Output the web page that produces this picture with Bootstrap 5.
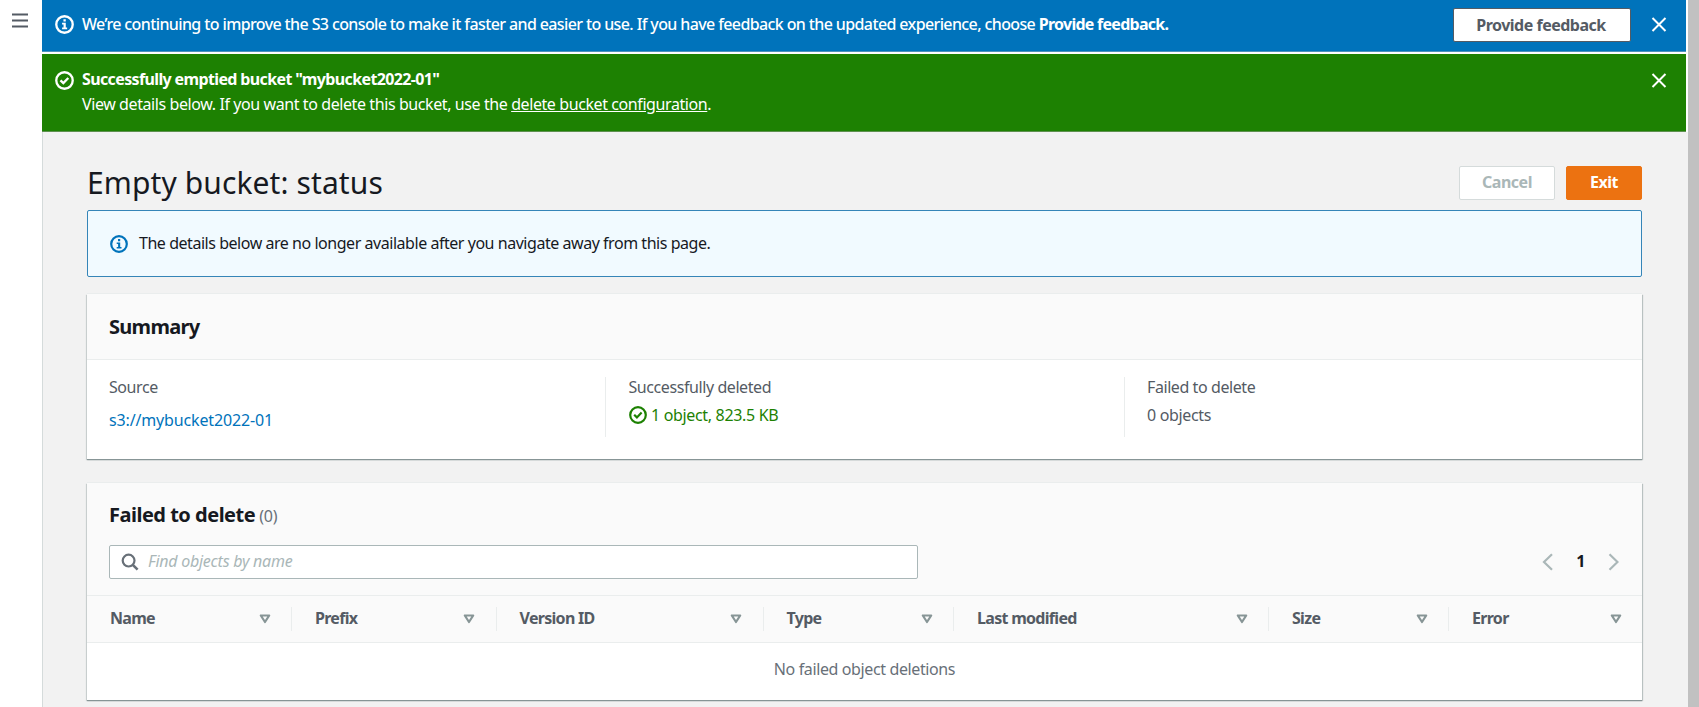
<!DOCTYPE html>
<html lang="en">
<head>
<meta charset="utf-8">
<title>Empty bucket: status</title>
<link href="https://cdn.jsdelivr.net/npm/bootstrap@5.3.0/dist/css/bootstrap.min.css" rel="stylesheet">
<script src="https://cdn.jsdelivr.net/npm/bootstrap@5.3.0/dist/js/bootstrap.bundle.min.js"></script>
<style>
body{font-family:"Noto Sans","Open Sans",sans-serif;font-size:16px;line-height:24px;letter-spacing:-.46px;color:#16191f;background:#fff;overflow:hidden}
svg{display:block;flex:none}
.app{height:707px}
.rail{width:42px;padding:13px 0 0 12px}
.pane{background:#f2f2f2;min-width:0}
.scroll-track{width:11px;background:#c1c1c1}
.flashes{padding-right:2px}
.flash{color:#fff;padding:0 19px 0 13px}
.flash .msg{padding-left:8px}
.flash-info{background:#0073bb;height:52px;padding-top:8px;border-bottom:1px solid #4f93bd}
.flash-info .msg{letter-spacing:-.615px;line-height:33px;font-weight:500}
.flash-info .msg b{letter-spacing:-.73px}
.flash-info .close-ico{margin:8px 0 0 20px}
.flash-ok{background:#1d8102;height:78px;margin-top:2px;padding-top:14px;border-bottom:1px solid #5e9150}
.flash-ok b{letter-spacing:-.63px}
.flash-ok .msg{letter-spacing:-.41px;line-height:25px;margin-top:-1px}
.flash-ok svg{margin-top:3px}
.flash-ok a{color:#fff}
.flash b,.aws-btn,th,h2{font-weight:700}
.aws-btn{font-size:16px;line-height:1;letter-spacing:-.5px;border-radius:2px;height:34px;padding:0;border:1px solid #545b64;background:#fff;color:#545b64}
.b-feed{width:178px;padding:0 2px 0 0}
.b-cancel{width:96px;border-color:#d5dbdb;color:#aab7b8}
.b-exit{width:76px;border-color:#ec7211;background:#ec7211;color:#fff;margin-left:11px}
.b-cancel,.b-exit{padding-bottom:2px;margin-top:1px}
.work{border-left:1px solid #d5dbdb;padding:33px 46px 0 44px;height:575px}
h1{font-size:30px;line-height:34px;letter-spacing:.1px;font-weight:400}
.note{height:67px;border:1px solid #3585b8;border-radius:2px;background:#f1faff;padding:0 0 2px 22px;margin-top:10px;color:#16191f;gap:11px}
.note svg{color:#0073bb;margin-top:3px}
.panel{background:#fff;border:0;border-radius:0;box-shadow:0 1px 1px 0 #879596,1px 1px 1px 0 #c3caca,-1px 1px 1px 0 #d5dada,0 -1px 0 0 #eaeded}
.panel-top{background:#fafafa;padding:0 23px 0 22px}
.summary{margin-top:17px;height:165px}
.summary .panel-top{height:66px;border-bottom:1px solid #eaeded}
h2{font-size:20px;line-height:24px;letter-spacing:-.7px;margin:0;color:#16191f}
.facts{padding:17px 0 0;color:#545b64}
.fact{height:60px;padding-left:22.5px;border-left:1px solid #eaeded}
.fact:first-child{border-left:0;width:518px;padding-left:22px}
.fact:nth-child(2){width:518.5px}
.fact .lbl{line-height:20px;letter-spacing:-.42px}
.fact .val{line-height:24px;margin-top:6px;gap:4.5px;letter-spacing:-.33px}
.fact .s3{margin-top:11px;color:#0073bb;text-decoration:none;letter-spacing:-.15px;display:block}
.ok-txt{color:#1d8102}
.fails{margin-top:24px;height:217px}
.fails .panel-top{height:113px;border-bottom:1px solid #eaeded;padding-top:20px}
.fails h2{letter-spacing:-.5px}
.cnt{color:#687078;font-size:16px;letter-spacing:-.2px}
.find{width:809px;height:34px;border:1px solid #aab7b8;border-radius:2px;background:#fff;padding:0 0 1px 11px;gap:9px;color:#aab7b8;font-style:italic;letter-spacing:-.25px}
.find input{border:0;outline:0;padding:0 0 1px;background:none;font:inherit;letter-spacing:inherit;width:700px}
.find input::placeholder{color:#aab7b8;opacity:1}
.tools{margin-top:17px}
.pages{gap:23px;padding-bottom:2px}
.pages svg{margin-top:2px}
.cols{table-layout:fixed;width:100%;margin:0}
.cols th{background:#fafafa;height:46px;padding:0;border-bottom:1px solid #eaeded;color:#545b64;letter-spacing:-.7px;vertical-align:middle}
.cols th>div{height:24px;line-height:24px;padding:0 20.5px 1px 23px;border-left:1px solid #eaeded}
.cols th svg{margin-top:2px}
.cols th:first-child>div{border-left:0}
.cols td{height:57px;padding:0 0 4px;border:0;color:#687078;letter-spacing:-.38px}
</style>
</head>
<body>
<svg width="0" height="0" class="position-absolute" aria-hidden="true">
 <symbol id="i-info" viewBox="0 0 18 18"><circle cx="9" cy="9" r="7.8" fill="none" stroke="currentColor" stroke-width="2.2"/><path d="M8 4.1h2.2v2.1H8zM6.7 7.4h3.5v4.5h1.3v1.6H6.7v-1.6h1.4V9H6.7z" fill="currentColor"/></symbol>
 <symbol id="i-check" viewBox="0 0 18 18"><circle cx="9" cy="9" r="7.8" fill="none" stroke="currentColor" stroke-width="2.2"/><path d="M5.2 8.8l2.7 2.6 4.7-4.8" fill="none" stroke="currentColor" stroke-width="2.2"/></symbol>
 <symbol id="i-close" viewBox="0 0 16 16"><path d="M1.5 1.5l13 13M14.5 1.5l-13 13" stroke="currentColor" stroke-width="2" fill="none"/></symbol>
 <symbol id="i-sort" viewBox="0 0 12 10"><path d="M1.8 1.5h8.4L6 8z" stroke="#879596" stroke-width="2.2" stroke-linejoin="round" fill="none"/></symbol>
</svg>
<div class="app d-flex">
 <nav class="rail flex-shrink-0"><svg width="16" height="15"><path d="M0 1.5h16M0 7.5h16M0 13.5h16" stroke="#545b64" stroke-width="2"/></svg></nav>
 <main class="pane flex-grow-1">
  <div class="flashes bg-white">
   <div class="flash flash-info d-flex align-items-start">
    <svg width="19" height="19" style="margin-top:7px"><use href="#i-info"/></svg>
    <div class="msg flex-grow-1">We’re continuing to improve the S3 console to make it faster and easier to use. If you have feedback on the updated experience, choose <b>Provide feedback.</b></div>
    <button class="btn aws-btn b-feed">Provide feedback</button>
    <svg class="close-ico" width="16" height="17"><use href="#i-close" y=".5" width="16" height="16"/></svg>
   </div>
   <div class="flash flash-ok d-flex align-items-start">
    <svg width="19" height="19"><use href="#i-check"/></svg>
    <div class="msg flex-grow-1"><b>Successfully emptied bucket "mybucket2022-01"</b><br>View details below. If you want to delete this bucket, use the <a href="#">delete bucket configuration</a>.</div>
    <svg width="16" height="17" class="mt-1"><use href="#i-close" y=".5" width="16" height="16"/></svg>
   </div>
  </div>
  <div class="work">
   <div class="d-flex align-items-center">
    <h1 class="m-0 flex-grow-1">Empty bucket: status</h1>
    <button class="btn aws-btn b-cancel">Cancel</button>
    <button class="btn aws-btn b-exit">Exit</button>
   </div>
   <div class="note d-flex align-items-center"><svg width="18" height="18"><use href="#i-info"/></svg><span>The details below are no longer available after you navigate away from this page.</span></div>
   <section class="card panel summary">
    <div class="panel-top d-flex align-items-center"><h2>Summary</h2></div>
    <div class="facts d-flex">
     <div class="fact"><div class="lbl">Source</div><a href="#" class="s3">s3://mybucket2022-01</a></div>
     <div class="fact"><div class="lbl">Successfully deleted</div><div class="val ok-txt d-flex align-items-center"><svg width="18" height="18"><use href="#i-check"/></svg>1 object, 823.5 KB</div></div>
     <div class="fact flex-grow-1"><div class="lbl">Failed to delete</div><div class="val">0 objects</div></div>
    </div>
   </section>
   <section class="card panel fails">
    <div class="panel-top">
     <div class="d-flex align-items-baseline gap-1"><h2>Failed to delete</h2><span class="cnt">(0)</span></div>
     <div class="tools d-flex align-items-center justify-content-between">
      <label class="find d-flex align-items-center"><svg width="18" height="18"><path d="M11.8 11.8L16.6 16.6" stroke="#687078" stroke-width="2.6"/><circle cx="7.6" cy="7.6" r="5.9" stroke="#687078" stroke-width="2.2" fill="none"/></svg><input type="text" placeholder="Find objects by name"></label>
      <div class="pages d-flex align-items-center">
       <svg width="11" height="18"><path d="M10 1.2L2 9l8 7.8" stroke="#aab7b8" stroke-width="2.2" fill="none"/></svg><b>1</b>
       <svg width="11" height="18"><path d="M1.5 1.2L9.5 9l-8 7.8" stroke="#aab7b8" stroke-width="2.2" fill="none"/></svg>
      </div>
     </div>
    </div>
    <table class="cols">
     <colgroup><col style="width:204px"><col style="width:204.5px"><col style="width:267px"><col style="width:190.5px"><col style="width:315px"><col style="width:180px"><col></colgroup>
     <thead><tr>
      <th><div class="d-flex align-items-center justify-content-between">Name<svg width="12" height="10"><use href="#i-sort"/></svg></div></th>
      <th><div class="d-flex align-items-center justify-content-between">Prefix<svg width="12" height="10"><use href="#i-sort"/></svg></div></th>
      <th><div class="d-flex align-items-center justify-content-between">Version ID<svg width="12" height="10"><use href="#i-sort"/></svg></div></th>
      <th><div class="d-flex align-items-center justify-content-between">Type<svg width="12" height="10"><use href="#i-sort"/></svg></div></th>
      <th><div class="d-flex align-items-center justify-content-between">Last modified<svg width="12" height="10"><use href="#i-sort"/></svg></div></th>
      <th><div class="d-flex align-items-center justify-content-between">Size<svg width="12" height="10"><use href="#i-sort"/></svg></div></th>
      <th><div class="d-flex align-items-center justify-content-between">Error<svg width="12" height="10"><use href="#i-sort"/></svg></div></th>
     </tr></thead>
     <tbody><tr><td colspan="7" class="text-center">No failed object deletions</td></tr></tbody>
    </table>
   </section>
  </div>
 </main>
 <div class="scroll-track flex-shrink-0"></div>
</div>
</body>
</html>
